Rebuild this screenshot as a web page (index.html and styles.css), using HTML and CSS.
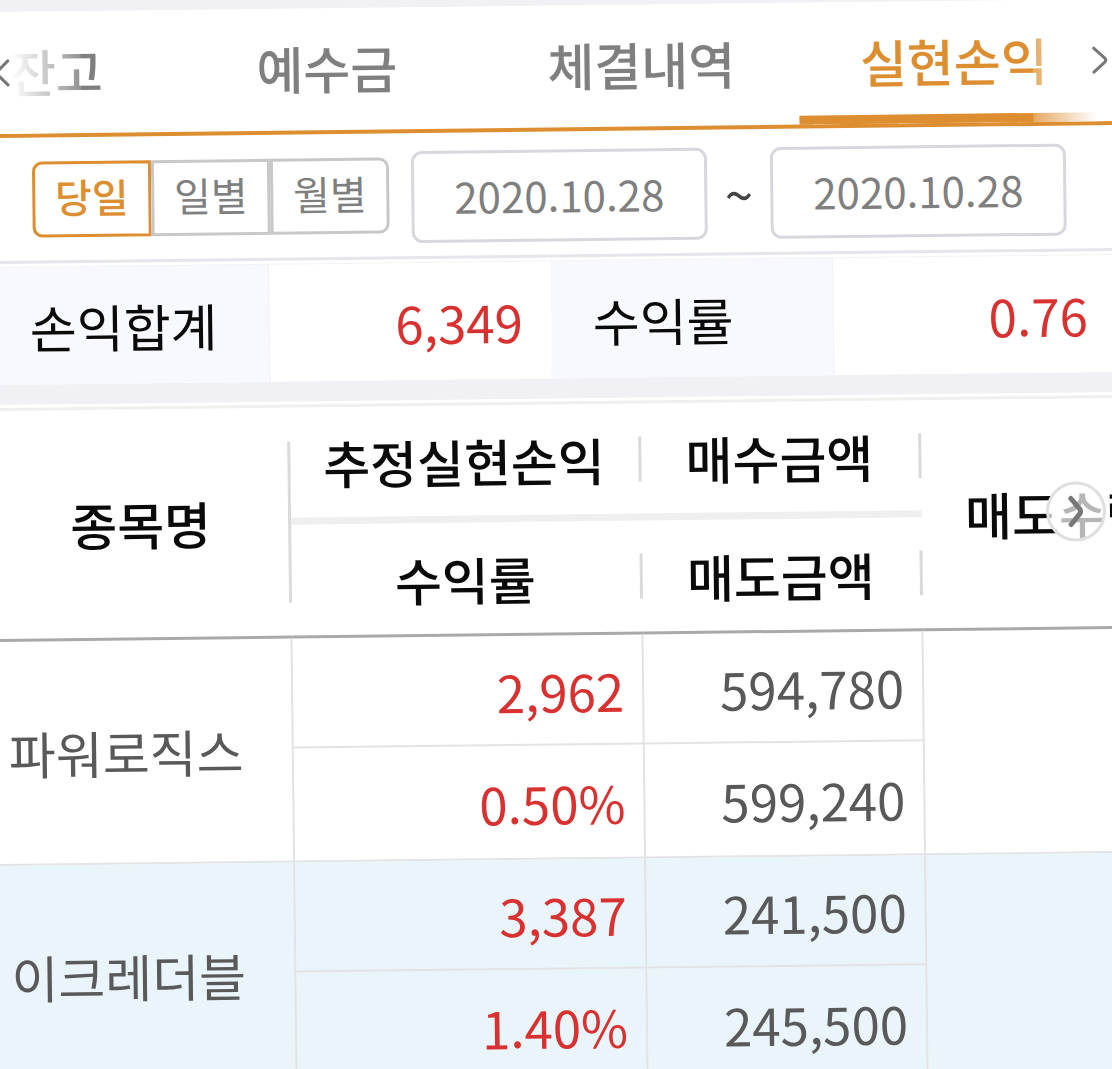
FILE: index.html
```html
<!DOCTYPE html>
<html lang="ko">
<head>
    <meta charset="UTF-8">
    <meta name="viewport" content="width=device-width, initial-scale=1.0">
    <title>실현손익</title>
    <link rel="stylesheet" href="styles.css">
</head>
<body>

<div class="screen">

    <!-- Tabs -->
    <nav class="tabs">
        <a href="#balance" class="tab tab-first">잔고</a>
        <a href="#deposit" class="tab">예수금</a>
        <a href="#orders" class="tab">체결내역</a>
        <a href="#profit" class="tab tab-last active">실현손익</a>
        <button class="tab-arrow prev" aria-label="이전">
            <svg width="18" height="30" viewBox="0 0 18 30"><path d="M15 3 L3 15 L15 27"/></svg>
        </button>
        <button class="tab-arrow next" aria-label="다음">
            <svg width="18" height="30" viewBox="0 0 18 30"><path d="M3 3 L14 13 Q16 15 14 17 L3 27"/></svg>
        </button>
    </nav>

    <!-- Period filter -->
    <form class="filter">
        <div class="period">
            <button type="button" class="selected">당일</button>
            <button type="button">일별</button>
            <button type="button">월별</button>
        </div>
        <input type="text" class="date" aria-label="시작일" value="2020.10.28">
        <span class="tilde">~</span>
        <input type="text" class="date" aria-label="종료일" value="2020.10.28">
    </form>

    <!-- Totals -->
    <dl class="summary">
        <dt>손익합계</dt>
        <dd>6,349</dd>
        <dt>수익률</dt>
        <dd>0.76</dd>
    </dl>

    <!-- Profit by stock -->
    <div class="list">
        <table>
            <colgroup>
                <col class="col-name">
                <col class="col-profit">
                <col class="col-amount">
                <col>
            </colgroup>
            <thead>
                <tr>
                    <th rowspan="2" class="divider-tall">종목명</th>
                    <th class="divider band">추정실현손익</th>
                    <th class="divider band">매수금액</th>
                    <th rowspan="2" class="qty">매도수량</th>
                </tr>
                <tr>
                    <th class="divider">수익률</th>
                    <th class="divider">매도금액</th>
                </tr>
            </thead>
            <tbody>
                <tr class="upper">
                    <td rowspan="2" class="name">파워로직스</td>
                    <td class="up">2,962</td>
                    <td>594,780</td>
                    <td rowspan="2" class="rest"></td>
                </tr>
                <tr class="lower">
                    <td class="up">0.50%</td>
                    <td>599,240</td>
                </tr>
            </tbody>
            <tbody class="even">
                <tr class="upper">
                    <td rowspan="2" class="name">이크레더블</td>
                    <td class="up">3,387</td>
                    <td>241,500</td>
                    <td rowspan="2" class="rest"></td>
                </tr>
                <tr class="lower">
                    <td class="up">1.40%</td>
                    <td>245,500</td>
                </tr>
            </tbody>
        </table>
        <button class="scroll-right" aria-label="오른쪽으로">
            <svg width="18" height="34" viewBox="0 0 18 34"><path d="M4 4 L13 15 Q14 17 13 19 L4 30"/></svg>
        </button>
    </div>

</div>

</body>
</html>
```
FILE: styles.css
```css
* {
    box-sizing: border-box;
}
body {
    margin: 0;
    height: 100vh;
    overflow: hidden;
    background-color: #fff;
    font-family: "Noto Sans CJK KR", sans-serif;
    font-size: 51px;
    line-height: 60px;
    color: #0a0a0a;
}
button, input {
    font-family: inherit;
    background-color: #fff;
    padding: 0;
    margin: 0;
}
button {
    cursor: pointer;
}
svg {
    display: block;
    fill: none;
    stroke: #777;
    stroke-width: 4;
    stroke-linecap: round;
}

/* the whole screen is slightly tilted, so it bleeds past both sides */
.screen {
    margin: 0 -16px;
    border-top: 12px solid #f0f0f5;
    transform: rotate(-0.67deg);
    transform-origin: 16px 0;
}

/* tabs */
.tabs {
    position: relative;
    display: grid;
    grid-template-columns: 185fr 314fr 315fr 330fr;
    height: 126px;
    border-bottom: 4px solid #dd8e30;
}
.tab {
    display: flex;
    align-items: center;
    justify-content: center;
    padding-bottom: 4px;
    color: #7f7f7f;
    font-weight: 500;
    text-decoration: none;
}
.tab-first {
    padding-right: 43px;
}
.tab-last {
    padding-right: 20px;
}
.tab.active {
    color: #dd8e30;
    box-shadow: inset 0 -9px #dd8e30;
}
.tab-arrow {
    position: absolute;
    top: 0;
    bottom: 0;
    width: 96px;
    border: none;
    display: flex;
    align-items: center;
}
.tab-arrow.prev {
    left: 0;
    padding-left: 8px;
    background: linear-gradient(to left, rgba(255, 255, 255, 0.15), #fff 72%);
}
.tab-arrow.next {
    right: 0;
    padding-right: 20px;
    justify-content: flex-end;
    background: linear-gradient(to right, rgba(255, 255, 255, 0.25), #fff 66%);
}
.tab-arrow svg {
    stroke-width: 3;
}

/* period filter */
.filter {
    display: flex;
    align-items: center;
    padding: 18px 64px 13px 46px;
    border-bottom: 3px solid #e4e6eb;
}
.period {
    display: flex;
    flex: 357;
    margin: 0 22px 4px 0;
}
.period button {
    flex: 1;
    height: 76px;
    padding-bottom: 6px;
    border: 3px solid #c8c8c8;
    font-size: 40px;
    color: #7f7f7f;
}
.period button:first-child {
    border-radius: 10px 0 0 10px;
}
.period button:last-child {
    border-radius: 0 10px 10px 0;
}
.period .selected {
    border-color: #dd8e30;
    color: #dd8e30;
    font-weight: 500;
}
.date {
    flex: 290;
    min-width: 0;
    height: 92px;
    padding-bottom: 4px;
    border: 3px solid #d6d8de;
    border-radius: 11px;
    font-size: 42px;
    text-align: center;
    color: #7f7f7f;
}
.tilde {
    width: 63px;
    text-align: center;
    color: #444;
}

/* totals */
.summary {
    display: grid;
    grid-template-columns: 282fr 281fr 283fr 298fr;
    margin: 3px 0 0;
    border-bottom: 20px solid #f0f0f5;
}
.summary dt, .summary dd {
    margin: 0;
    height: 118px;
    padding: 29px 28px;
    border-top: 1px solid #f3f3f7;
}
.summary dt {
    padding-left: 42px;
    background-color: #f8f9fe;
    border-right: 1px solid #f1f1f6;
}
.summary dd {
    text-align: right;
    color: #d93030;
}
.summary dd:last-child {
    padding-right: 44px;
}

/* stock list */
.list {
    position: relative;
    margin-top: 3px;
    border-top: 3px solid #efeff0;
}
table {
    width: 100%;
    table-layout: fixed;
    border-collapse: separate;
    border-spacing: 0;
}
.col-name {
    width: 301px;
}
.col-profit {
    width: 351px;
}
.col-amount {
    width: 280px;
}
th {
    height: 114px;
    padding: 0;
    font-weight: 500;
    white-space: nowrap;
}
thead tr:last-child th, thead th[rowspan] {
    border-bottom: 3px solid #a9a9a9;
}
.divider {
    padding-right: 4px;
    background: linear-gradient(#dadada, #dadada) right center / 3px 45px no-repeat;
}
.divider-tall {
    background: linear-gradient(#dadada, #dadada) right center / 3px 161px no-repeat;
}
.band {
    height: 117px;
    border-bottom: 7px solid #efeff0;
}
.qty {
    padding-left: 43px;
    text-align: left;
}
td {
    padding: 2px 18px 0;
    border-right: 2px solid #e3e3e6;
    border-bottom: 2px solid #e3e3e6;
    text-align: right;
    color: #595959;
}
.upper td {
    height: 110px;
}
.lower td {
    height: 114px;
}
td.name {
    padding: 0 16px;
    text-align: left;
}
td.rest {
    border-right: none;
}
.up {
    color: #d93030;
}
.even {
    background-color: #e9f4fb;
}
.scroll-right {
    position: absolute;
    top: 83px;
    right: 28px;
    width: 60px;
    height: 60px;
    display: flex;
    align-items: center;
    justify-content: center;
    border: 3px solid #dfdfe2;
    border-radius: 50%;
    background-color: rgba(255, 255, 255, 0.7);
}
.scroll-right svg {
    stroke-width: 5;
}
```
